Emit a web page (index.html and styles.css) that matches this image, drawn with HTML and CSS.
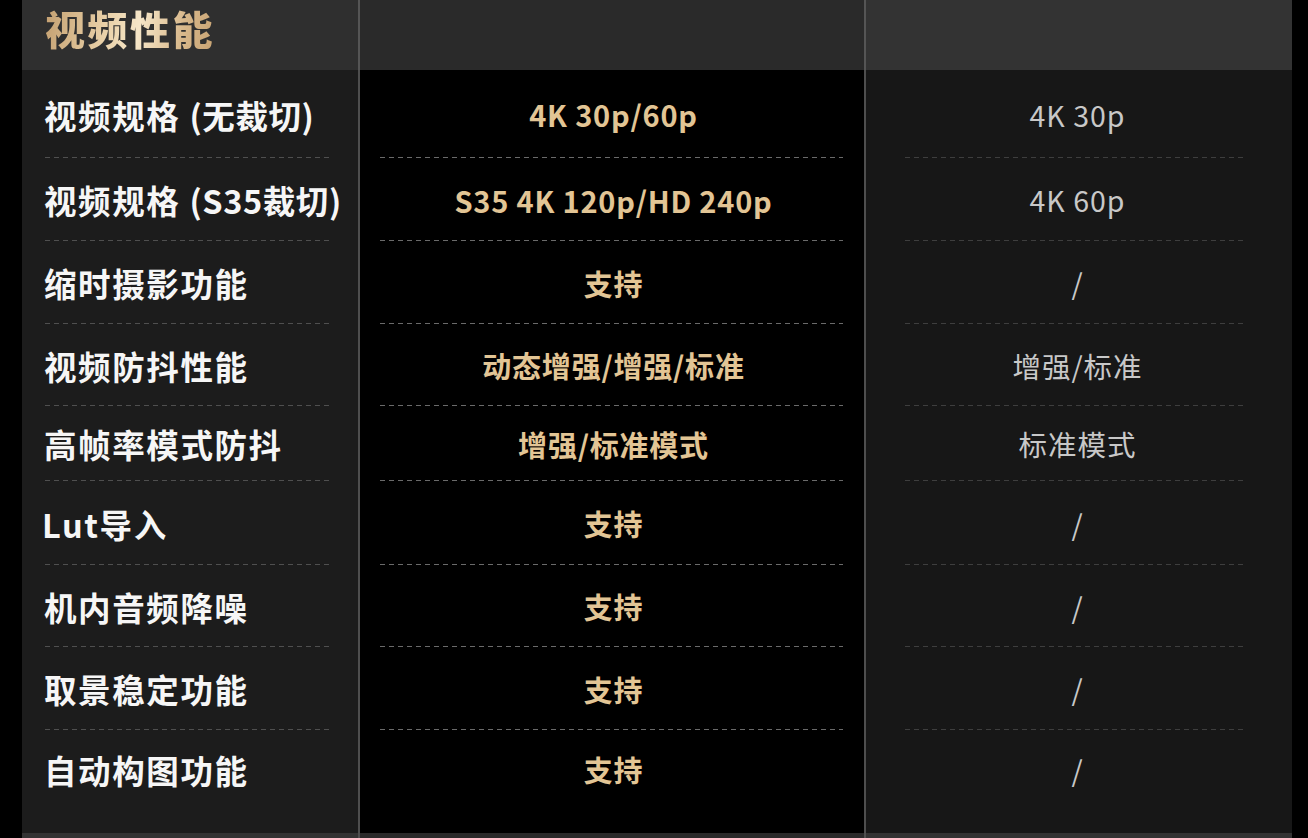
FILE: index.html
```html
<!DOCTYPE html>
<html lang="zh-CN">
<head>
<meta charset="utf-8">
<title>视频性能</title>
<link rel="stylesheet" href="styles.css">
</head>
<body>
<div class="page">
  <div class="table">
    <div class="cell head label"><span class="title">视频性能</span></div>
    <div class="cell head mid"></div>
    <div class="cell head right"></div>

    <div class="cell label line">视频规格 <span class="paren">(无裁切)</span></div>
    <div class="cell mid line">4K 30p/60p</div>
    <div class="cell right line">4K 30p</div>

    <div class="cell label line">视频规格 <span class="paren">(S35裁切)</span></div>
    <div class="cell mid line">S35 4K 120p/HD 240p</div>
    <div class="cell right line">4K 60p</div>

    <div class="cell label line">缩时摄影功能</div>
    <div class="cell mid line">支持</div>
    <div class="cell right line">/</div>

    <div class="cell label line">视频防抖性能</div>
    <div class="cell mid line">动态增强/增强/标准</div>
    <div class="cell right line">增强/标准</div>

    <div class="cell label line">高帧率模式防抖</div>
    <div class="cell mid line">增强/标准模式</div>
    <div class="cell right line">标准模式</div>

    <div class="cell label line lut">Lut导入</div>
    <div class="cell mid line">支持</div>
    <div class="cell right line">/</div>

    <div class="cell label line">机内音频降噪</div>
    <div class="cell mid line">支持</div>
    <div class="cell right line">/</div>

    <div class="cell label line">取景稳定功能</div>
    <div class="cell mid line">支持</div>
    <div class="cell right line">/</div>

    <div class="cell label">自动构图功能</div>
    <div class="cell mid">支持</div>
    <div class="cell right">/</div>

    <div class="cell label"></div>
    <div class="cell mid"></div>
    <div class="cell right"></div>

    <div class="cell foot"></div>
    <div class="cell foot mid"></div>
    <div class="cell foot right"></div>
  </div>
</div>
</body>
</html>
```

FILE: styles.css
```css
html, body {
  margin: 0;
  padding: 0;
  background: #000;
}

body {
  font-family: "Noto Sans CJK SC", "Noto Sans", sans-serif;
}

.page {
  width: 1308px;
  height: 838px;
  overflow: hidden;
  background: #000;
  display: flex;
  padding-left: 22px;
  box-sizing: border-box;
}

.table {
  display: grid;
  grid-template-columns: 336px 508px 426px;
  grid-template-rows: 70px 88px 83px 83px 82px 75px 84px 82px 83px 78px 25px 5px;
}

.cell {
  display: flex;
  align-items: center;
  box-sizing: border-box;
  background-repeat: no-repeat;
  white-space: pre;
}

.label {
  background-color: #1c1c1c;
  color: #f6f6f6;
  font-weight: 700;
  font-size: 32.5px;
  padding-left: 22px;
  letter-spacing: 1.6px;
}

.paren {
  letter-spacing: 0.6px;
}

.lut {
  padding-left: 20px;
}

.mid {
  background-color: #000;
  border-left: 2px solid #4e4e4e;
  border-right: 2px solid #4e4e4e;
  justify-content: center;
  color: #e2c595;
  font-weight: 700;
  font-size: 29px;
  letter-spacing: 0.8px;
  padding-left: 3px;
}

.right {
  background-color: #171717;
  justify-content: center;
  color: #c8c8c8;
  font-weight: 400;
  font-size: 28.5px;
  letter-spacing: 1px;
  padding-right: 3px;
}

.head.label {
  background-color: #2f2f2f;
  padding-left: 23px;
  padding-bottom: 14px;
}

.head.mid {
  background-color: #2a2a2a;
  border-color: #555;
}

.head.right {
  background-color: #333;
}

.title {
  font-size: 40px;
  font-weight: 900;
  letter-spacing: 2.5px;
  line-height: 1.2;
  background: linear-gradient(100deg, #c39f70 0%, #e8cfa6 35%, #f6e6c8 55%, #d8b88b 80%, #c7a272 100%);
  -webkit-background-clip: text;
  background-clip: text;
  color: transparent;
}

.line.label {
  background-image: repeating-linear-gradient(to right, #4f4f4f 0 5px, transparent 5px 9px);
  background-size: 287px 1px;
  background-position: 23px 100%;
}

.line.mid {
  background-image: repeating-linear-gradient(to right, #6a6a6a 0 5px, transparent 5px 9px);
  background-size: 463px 1px;
  background-position: 20px 100%;
}

.line.right {
  background-image: repeating-linear-gradient(to right, #3e3e3e 0 5px, transparent 5px 9px);
  background-size: 342px 1px;
  background-position: 39px 100%;
}

.foot {
  background-color: #333;
}

.foot.mid {
  background-color: #2a2a2a;
}
```
